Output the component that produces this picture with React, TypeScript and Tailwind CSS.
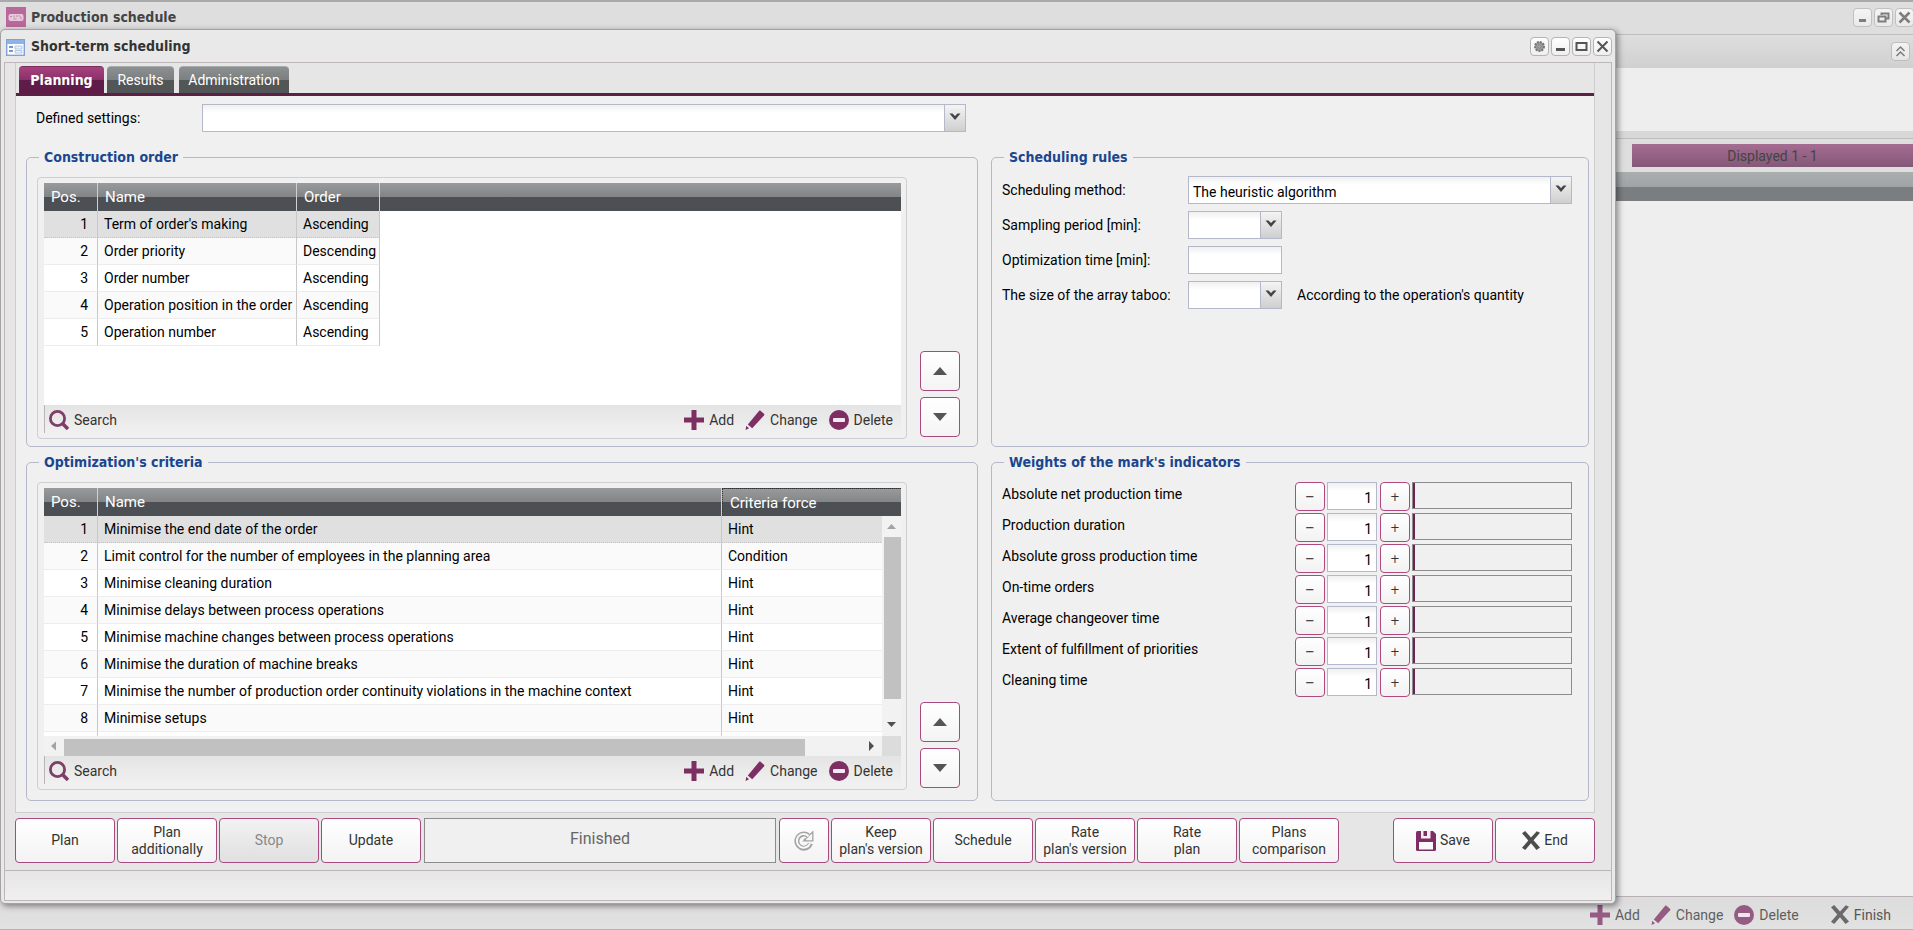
import type { ReactNode } from "react";

const FONT = "font-['Roboto','Noto_Sans',sans-serif]";
const BOLD = "font-['DejaVu_Sans_Condensed','DejaVu_Sans',sans-serif] font-bold";

function SmallIconButton({ label, children }: { label: string; children: ReactNode }) {
  return (
    <button
      type="button"
      aria-label={label}
      className="flex size-[19px] shrink-0 items-center justify-center rounded-[4px] border border-[#b4b4b4] bg-linear-to-b from-white to-[#efefef]"
    >
      <svg width="13" height="13" viewBox="0 0 13 13" fill="none" stroke="#555" strokeWidth="2">
        {children}
      </svg>
    </button>
  );
}

function ToolButton({ icon, children }: { icon: ReactNode; children: ReactNode }) {
  return (
    <button type="button" className="flex items-center gap-[5px] whitespace-nowrap text-[#333]">
      {icon}
      {children}
    </button>
  );
}

const PlusIcon = () => (
  <svg width="20" height="20" viewBox="0 0 20 20" fill="#7d2f63">
    <path d="M7.5 0h5v7.5H20v5h-7.5V20h-5v-7.5H0v-5h7.5z" />
  </svg>
);

const PencilIcon = () => (
  <svg width="20" height="20" viewBox="0 0 20 20" fill="#7d2f63">
    <path d="M15.500.8l3.500 3c.5.5.5 1 .1 1.500L7.200 18.300 2.800 14.500 14 1c.5-.5 1-.6 1.500-.2z" />
    <path d="M1.300 15.800L4 18.200.6 20z" />
  </svg>
);

const MinusIcon = () => (
  <svg width="20" height="20" viewBox="0 0 20 20">
    <circle cx="10" cy="10" r="10" fill="#7d2f63" />
    <rect x="4" y="8" width="12" height="4" rx="1" fill="#f2eaf0" />
  </svg>
);

const SearchIcon = () => (
  <svg width="20" height="20" viewBox="0 0 20 20" fill="none" stroke="#7d3f68" strokeWidth="2.800">
    <circle cx="8.500" cy="8.500" r="7.100" />
    <path d="M13.500 13.500l5.500 5.500" strokeWidth="3.600" />
  </svg>
);

const CrossIcon = () => (
  <svg width="18" height="19" viewBox="0 0 18 19" fill="#4d4d4d">
    <path d="M0 2.200L3.200 0 9 6.500 14.800.2 18 1.800 11.500 9.200 18 16.500 14.500 19 9 12.300 3.200 19 0 16.800 6.300 9.500z" />
  </svg>
);

const SaveIcon = () => (
  <svg width="20" height="20" viewBox="0 0 20 20">
    <path d="M0 1.500Q0 0 1.500 0H17l3 3v15.500Q20 20 18.500 20h-17Q0 20 0 18.500z" fill="#7d2f63" />
    <path d="M5 0h9.500v7.500H5z" fill="#f6eef3" />
    <path d="M7.500 0H11v5H7.500z" fill="#7d2f63" />
    <path d="M3 11h14v7.500H3z" fill="#fafafa" />
  </svg>
);

const ReloadIcon = () => (
  <svg width="20" height="20" viewBox="0 0 20 20" fill="none">
    <path d="M16.500 12.500A7 7 0 1 1 14.200 4.600" stroke="#a3a3a3" strokeWidth="5" />
    <path d="M18.800.8v9H9.800l3.200-3.200z" fill="#f8f8f8" stroke="#a3a3a3" strokeWidth="1.300" />
    <path d="M16 12.300A6.800 6.800 0 1 1 14.600 5.200" stroke="#f8f8f8" strokeWidth="2" />
    <path d="M9.800 7.800l2.200 2" stroke="#a3a3a3" strokeWidth="1.300" />
  </svg>
);

function DropDown({ id, label, value, className }: { id: string; label?: string; value?: string; className: string }) {
  return (
    <div className={`relative h-7 ${className}`}>
      <select
        id={id}
        aria-label={label}
        className="size-full appearance-none border border-[#b5b8c8] bg-white bg-linear-to-b from-[#f0f0f0] to-white to-30% pl-1 pt-[3px] text-black"
      >
        <option>{value ?? ""}</option>
      </select>
      <span className="pointer-events-none absolute inset-y-px right-px flex w-[21px] items-center justify-center border-l border-[#b5b8c8] bg-linear-to-b from-[#f4f4f4] to-[#cfcfcf]">
        <svg width="12" height="8" viewBox="0 0 12 8" className="mb-[2px]">
          <path d="M.500 0.500L3.500.5 6 3 8.500.5 11.500.5 6 7z" fill="#444" />
        </svg>
      </span>
    </div>
  );
}

function Group({ title, className, children }: { title: string; className: string; children: ReactNode }) {
  return (
    <fieldset className={`min-w-0 rounded-[5px] border border-[#b5b8c8] pl-[10px] ${className}`}>
      <legend className={`ml-[2px] px-[5px] leading-[19px] text-[#1a468f] ${BOLD}`}>{title}</legend>
      {children}
    </fieldset>
  );
}

function GridFrame({ children }: { children: ReactNode }) {
  return (
    <div className="min-w-0 flex-1 rounded-[4px] border border-[#cfcfcf] pb-[5px] pl-[6px] pr-[5px] pt-[5px]">
      {children}
      <div className="flex h-7 items-center gap-[11px] border-l border-[#b9b3b7] bg-linear-to-b from-[#e4e4e4] to-[#f0f0f0] pl-1 pr-2 pt-[2px]">
        <ToolButton icon={<SearchIcon />}>Search</ToolButton>
        <span className="flex-1" />
        <ToolButton icon={<PlusIcon />}>Add</ToolButton>
        <ToolButton icon={<PencilIcon />}>Change</ToolButton>
        <ToolButton icon={<MinusIcon />}>Delete</ToolButton>
      </div>
    </div>
  );
}

const HEADER = "bg-linear-to-b from-[#989a9b] from-0% via-[#828486] via-50% to-[#4c4f54] to-50%";

function Grid({
  headers,
  rows,
  widths,
  filler,
}: {
  headers: string[];
  rows: string[][];
  widths: string[];
  filler?: boolean;
}) {
  return (
    <table className="w-full table-fixed border-separate border-spacing-0">
      <thead>
        <tr className="h-7 text-left text-white">
          {headers.map((h, i) => (
            <th
              key={h}
              className={`${widths[i]} ${HEADER} pl-[7px] text-[15px] font-normal ${
                i < headers.length - 1 || filler ? "border-r border-[#d0d0d0]" : "border-l border-t border-dotted border-[#333]"
              }`}
            >
              {h}
            </th>
          ))}
          {filler && <th aria-hidden="true" className={HEADER} />}
        </tr>
      </thead>
      <tbody>
        {rows.map((r, n) => (
          <tr key={n} className={`h-[27px] ${n === 0 ? "bg-[#e0e0e0]" : n % 2 ? "bg-[#fafafa]" : "bg-white"}`}>
            {r.map((c, i) => (
              <td
                key={i}
                className={`whitespace-nowrap border-b ${n === 0 ? "border-b-[#c4c4c4] [border-bottom-style:dotted]" : "border-b-[#ededed]"} ${
                  i === 0 ? "pr-[9px] text-right" : "pl-[6px]"
                } ${i < r.length - 1 || filler ? "border-r border-r-[#c8c8c8]" : ""}`}
              >
                {c}
              </td>
            ))}
            {filler && <td className="bg-white" />}
          </tr>
        ))}
      </tbody>
    </table>
  );
}

function MoveButtons() {
  return (
    <div className="mb-[2px] flex flex-col justify-end gap-[6px]">
      {["Move up", "Move down"].map((label, i) => (
        <button
          key={label}
          type="button"
          aria-label={label}
          className="flex size-10 items-center justify-center rounded-[4px] border border-[#a64a7f] bg-linear-to-b from-white to-[#f4f4f4]"
        >
          <svg width="14" height="8" viewBox="0 0 14 8">
            <path d={i ? "M0 0h14L7 8z" : "M0 8h14L7 0z"} fill="#555" />
          </svg>
        </button>
      ))}
    </div>
  );
}

function ActionButton({ children, disabled, className = "w-[100px]" }: { children: ReactNode; disabled?: boolean; className?: string }) {
  return (
    <button
      type="button"
      disabled={disabled}
      className={`flex h-[45px] shrink-0 items-center justify-center gap-1 rounded-[4px] border border-[#a64a7f] bg-linear-to-b text-center leading-[17px] ${
        disabled ? "from-[#f2f2f2] to-[#e0e0e0] text-[#888]" : "from-white to-[#f3f3f3] text-[#333]"
      } ${className}`}
    >
      {children}
    </button>
  );
}

const orderRows = [
  ["1", "Term of order's making", "Ascending"],
  ["2", "Order priority", "Descending"],
  ["3", "Order number", "Ascending"],
  ["4", "Operation position in the order", "Ascending"],
  ["5", "Operation number", "Ascending"],
];

const criteriaRows = [
  ["1", "Minimise the end date of the order", "Hint"],
  ["2", "Limit control for the number of employees in the planning area", "Condition"],
  ["3", "Minimise cleaning duration", "Hint"],
  ["4", "Minimise delays between process operations", "Hint"],
  ["5", "Minimise machine changes between process operations", "Hint"],
  ["6", "Minimise the duration of machine breaks", "Hint"],
  ["7", "Minimise the number of production order continuity violations in the machine context", "Hint"],
  ["8", "Minimise setups", "Hint"],
  ["", "", ""],
];

const weights = [
  "Absolute net production time",
  "Production duration",
  "Absolute gross production time",
  "On-time orders",
  "Average changeover time",
  "Extent of fulfillment of priorities",
  "Cleaning time",
];

const GREY_TAB =
  "h-[27px] rounded-t-[4px] border-t border-[#a8abab] bg-linear-to-b from-[#8d9090] from-0% via-[#7c7f7f] via-50% to-[#525656] to-50% text-white";

function Background() {
  return (
    <div className="flex min-h-screen flex-col border-t-2 border-[#a9a9a9] bg-[#dedede]">
      <header className="flex h-8 shrink-0 items-center gap-[5px] pb-[2px] pl-[6px]">
        <svg width="20" height="20" viewBox="0 0 20 20">
          <rect width="20" height="20" fill="#b8689a" />
          <rect x="2.500" y="7" width="15" height="7" rx="2" fill="#e6c9db" />
          <path d="M4 9.500h2m2-1v2m2-1.500h2.500m-5 3h3m3-3.500l1.500 2v2" stroke="#c586ae" fill="none" />
        </svg>
        <h1 className={`flex-1 text-[#444] ${BOLD}`}>Production schedule</h1>
        <div className="-mr-px flex gap-[2px] opacity-70">
          <SmallIconButton label="Minimise window">
            <path d="M3 9.500h7" strokeWidth="3" />
          </SmallIconButton>
          <SmallIconButton label="Restore window">
            <path d="M4.500 4V2.500h7v5H9.500M1.500 5.500h7v5h-7z" />
          </SmallIconButton>
          <SmallIconButton label="Close window">
            <path d="M1.500 1.500l10 10m0-10l-10 10" strokeWidth="2.500" />
          </SmallIconButton>
        </div>
      </header>
      <div className="flex h-[34px] shrink-0 items-center justify-end border-t border-[#bdbdbd] bg-linear-to-b from-[#dedede] to-[#d0d0d0] pr-[3px]">
        <span className="opacity-70">
          <SmallIconButton label="Collapse">
            <path d="M2.500 6l4-4 4 4m-8 5l4-4 4 4" strokeWidth="1.500" />
          </SmallIconButton>
        </span>
      </div>
      <div className="h-[63px] shrink-0 bg-[#eee]" />
      <div className="h-2 shrink-0 border-b border-[#bcbcbc] bg-[#d8d8d8]" />
      <div className="flex h-[33px] shrink-0 justify-end py-[5px]">
        <div className="flex w-[281px] items-center justify-center bg-linear-to-b from-[#a56c92] to-[#845878] text-[14px] text-[#444]">
          Displayed 1 - 1
        </div>
      </div>
      <div className="h-[29px] shrink-0 bg-linear-to-b from-[#aaaeaf] from-0% via-[#a0a4a5] via-50% to-[#7b7e80] to-50%" />
      <div className="flex-1 bg-[#eee]" />
      <footer className="flex h-[34px] shrink-0 items-center justify-end gap-[12px] border-b border-t border-[#b8b0b5] bg-linear-to-b from-[#dcdcdc] to-[#e2e2e2] pr-[22px] pt-[3px]">
        <span className="flex gap-[11px] opacity-75">
          <ToolButton icon={<PlusIcon />}>Add</ToolButton>
          <ToolButton icon={<PencilIcon />}>Change</ToolButton>
          <ToolButton icon={<MinusIcon />}>Delete</ToolButton>
        </span>
        <span className="ml-5 opacity-80">
          <ToolButton icon={<CrossIcon />}>Finish</ToolButton>
        </span>
      </footer>
    </div>
  );
}

function SchedulingRules() {
  return (
    <Group title="Scheduling rules" className="pr-4">
      <div className="grid grid-cols-[186px_94px_1fr] items-center gap-y-[7px] pt-[9px]">
        <label htmlFor="method">Scheduling method:</label>
        <DropDown id="method" value="The heuristic algorithm" className="col-span-2" />
        <label htmlFor="sampling">Sampling period [min]:</label>
        <DropDown id="sampling" className="" />
        <span />
        <label htmlFor="optimization">Optimization time [min]:</label>
        <input id="optimization" className="h-7 w-full border border-[#b5b8c8] bg-white bg-linear-to-b from-[#f0f0f0] to-white to-30% px-1" />
        <span />
        <label htmlFor="taboo">The size of the array taboo:</label>
        <DropDown id="taboo" className="" />
        <span className="pl-[15px]">According to the operation's quantity</span>
      </div>
    </Group>
  );
}

function Weights() {
  const step =
    "flex h-[29px] w-[30px] shrink-0 items-center justify-center rounded-[4px] border border-[#b0497f] bg-linear-to-b from-white to-[#f2f2f2] font-['DejaVu_Sans_Condensed','DejaVu_Sans',sans-serif] text-[13px] text-[#333]";
  return (
    <Group title="Weights of the mark's indicators" className="pr-4">
      <div className="flex flex-col gap-[2px] pt-[10px]">
        {weights.map((w, i) => (
          <div key={w} className="flex items-start">
            <label htmlFor={`weight-${i}`} className="min-w-0 flex-1 leading-[25px]">
              {w}
            </label>
            <button type="button" aria-label={`Decrease ${w}`} className={step}>
              −
            </button>
            <input
              id={`weight-${i}`}
              defaultValue="1"
              className="ml-[2px] mr-[3px] h-7 w-[50px] border border-[#b5b8c8] bg-white bg-linear-to-b from-[#f0f0f0] to-white to-30% pr-1 pt-1 text-right"
            />
            <button type="button" aria-label={`Increase ${w}`} className={step}>
              +
            </button>
            <div role="progressbar" aria-label={w} className="ml-[2px] h-[27px] w-40 border border-[#8c8c8c] bg-[#f0f0f0]">
              <div className="h-full w-[2px] bg-[#6b2353]" />
            </div>
          </div>
        ))}
      </div>
    </Group>
  );
}

export default function App() {
  return (
    <div className={`relative min-h-screen overflow-hidden text-[14px] leading-5 text-black ${FONT}`}>
      <Background />
      <section className="absolute left-0 right-[297px] top-[29px] rounded-[5px] border border-[#a3a3a3] bg-[#e9e9e9] px-[3px] pb-[2px] shadow-[2px_2px_6px_rgba(0,0,0,0.45)]">
        <header className="flex h-8 items-center gap-[6px] pl-[2px]">
          <svg width="19" height="17" viewBox="0 0 19 17" className="mt-[2px]">
            <rect x=".7" y=".7" width="17.600" height="15.600" fill="#fff" stroke="#7da3d8" strokeWidth="1.400" />
            <path d="M1 1h17v4H1z" fill="#8fb4e4" />
            <path d="M3 8h4M3 12h4" stroke="#4a78b8" strokeWidth="1.500" />
            <path d="M9 7h7v3H9zM9 11.500h7v2.500H9z" fill="#e8f0fa" stroke="#a3bde0" strokeWidth=".8" />
          </svg>
          <h2 className={`flex-1 text-[#333] ${BOLD}`}>Short-term scheduling</h2>
          <div className="flex gap-[2px]">
            <SmallIconButton label="Settings">
              <circle cx="6.500" cy="6.500" r="4.500" fill="#999" stroke="#777" strokeDasharray="2 1" />
              <circle cx="6.500" cy="6.500" r="1.500" fill="#b0b0b0" strokeWidth="1" stroke="#888" />
            </SmallIconButton>
            <SmallIconButton label="Minimise">
              <path d="M2 9.500h9" strokeWidth="3" />
            </SmallIconButton>
            <SmallIconButton label="Maximise">
              <path d="M1.500 3h10v7h-10z" />
            </SmallIconButton>
            <SmallIconButton label="Close">
              <path d="M1.500 1.500l10 10m0-10l-10 10" />
            </SmallIconButton>
          </div>
        </header>

        <div className="border border-[#bcb6b9]">
          <div className="bg-[#e6e6e6] pb-[7px] pl-[10px] pr-4">
            <div className="border-x border-b border-[#cdcdcd] bg-[#f0f0f0]">
              <nav role="tablist" className="flex items-end gap-[3px] border-b-[3px] border-[#5a2145] bg-[#e6e6e7] pl-[3px] pt-[3px]">
                <button
                  type="button"
                  role="tab"
                  aria-selected="true"
                  className={`h-[27px] w-[85px] rounded-t-[4px] border-t border-[#7d2b5d] bg-linear-to-b from-[#a5437e] from-0% via-[#8c2f68] via-50% to-[#5f1c48] to-50% text-white ${BOLD}`}
                >
                  Planning
                </button>
                <button type="button" role="tab" className={`w-[67px] ${GREY_TAB}`}>
                  Results
                </button>
                <button type="button" role="tab" className={`ml-[2px] w-[110px] ${GREY_TAB}`}>
                  Administration
                </button>
              </nav>
              <div className="pb-[11px] pl-[10px] pr-[5px] pt-2">
                <div className="mb-4 flex items-center pl-[10px]">
                  <label htmlFor="defined" className="w-[166px]">
                    Defined settings:
                  </label>
                  <DropDown id="defined" className="w-[764px]" />
                </div>
                <div className="grid grid-cols-[952fr_598fr] gap-x-[13px] gap-y-[6px]">
                  <Group title="Construction order" className="pb-[7px] pr-[17px] pt-[10px]">
                    <div className="flex gap-[13px]">
                      <GridFrame>
                        <div className="h-[222px] bg-white">
                          <Grid
                            headers={["Pos.", "Name", "Order"]}
                            rows={orderRows}
                            widths={["w-[54px]", "w-[199px]", "w-[83px]"]}
                            filler
                          />
                        </div>
                      </GridFrame>
                      <MoveButtons />
                    </div>
                  </Group>
                  <SchedulingRules />
                  <Group title="Optimization's criteria" className="pb-[10px] pr-[17px] pt-[10px]">
                    <div className="flex gap-[13px]">
                      <GridFrame>
                        <div className="relative h-[248px] overflow-hidden bg-white">
                          <Grid
                            headers={["Pos.", "Name", "Criteria force"]}
                            rows={criteriaRows}
                            widths={["w-[54px]", "w-auto", "w-[179px]"]}
                          />
                          <div className="absolute bottom-0 right-0 top-7 flex w-[19px] flex-col items-center justify-between bg-[#f2f2f2]">
                            <svg width="9" height="21" viewBox="0 0 9 21" className="shrink-0">
                              <path d="M0 13h9L4.500 8z" fill="#a3a3a3" />
                            </svg>
                            <div className="ml-[2px] h-[162px] w-[17px] self-start bg-[#c1c1c1]" />
                            <span className="flex-1" />
                            <svg width="9" height="22" viewBox="0 0 9 22" className="shrink-0">
                              <path d="M0 8h9l-4.500 5z" fill="#505050" />
                            </svg>
                          </div>
                        </div>
                        <div className="flex h-5 items-center bg-[#f2f2f2]">
                          <svg width="20" height="12" viewBox="0 0 20 12" className="shrink-0">
                            <path d="M12 1.500v9L7 6z" fill="#a3a3a3" />
                          </svg>
                          <div className="mt-[2px] h-[17px] min-w-0 flex-1 bg-[#c1c1c1]" />
                          <span className="w-[61px]" />
                          <svg width="16" height="12" viewBox="0 0 16 12" className="shrink-0">
                            <path d="M3 1v10l5-5z" fill="#505050" />
                          </svg>
                          <div className="h-full w-[19px] bg-[#dcdcdc]" />
                        </div>
                      </GridFrame>
                      <MoveButtons />
                    </div>
                  </Group>
                  <Weights />
                </div>
              </div>
            </div>
            <div className="mt-[5px] flex gap-[2px]">
              <ActionButton>Plan</ActionButton>
              <ActionButton>
                Plan
                <br />
                additionally
              </ActionButton>
              <ActionButton disabled>Stop</ActionButton>
              <ActionButton>Update</ActionButton>
              <div className="mx-px flex min-w-0 flex-1 justify-center border border-[#8c8c8c] bg-[#f0f0f0] pt-[10px] text-[16px] text-[#666]">
                Finished
              </div>
              <ActionButton className="w-[50px]">
                <ReloadIcon />
              </ActionButton>
              <ActionButton>
                Keep
                <br />
                plan's version
              </ActionButton>
              <ActionButton>Schedule</ActionButton>
              <ActionButton>
                Rate
                <br />
                plan's version
              </ActionButton>
              <ActionButton>
                Rate
                <br />
                plan
              </ActionButton>
              <ActionButton>
                Plans
                <br />
                comparison
              </ActionButton>
              <span className="w-[50px]" />
              <ActionButton>
                <SaveIcon />
                Save
              </ActionButton>
              <ActionButton>
                <CrossIcon />
                End
              </ActionButton>
            </div>
          </div>
          <footer className="h-[30px] border-t border-[#bcb6b9] bg-linear-to-b from-[#e6e6e6] to-[#f0f0f0]" />
        </div>
      </section>
    </div>
  );
}
